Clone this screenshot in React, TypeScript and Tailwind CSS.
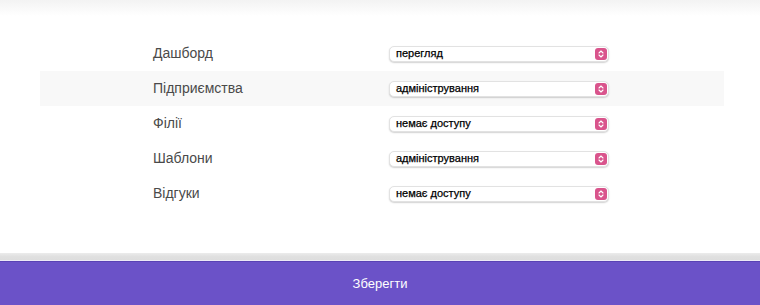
import React from "react";

const rows = [
  { label: "Дашборд", value: "перегляд" },
  { label: "Підприємства", value: "адміністрування" },
  { label: "Філії", value: "немає доступу" },
  { label: "Шаблони", value: "адміністрування" },
  { label: "Відгуки", value: "немає доступу" },
];

function Arrow() {
  return (
    <div className="w-[12px] h-[12px] rounded-[3px] bg-[#d9548c] flex items-center justify-center">
      <svg width="8" height="10" viewBox="0 0 8 10" fill="none">
        <path d="M2 4 L4 2 L6 4" stroke="white" strokeWidth="1.1" strokeLinecap="round" strokeLinejoin="round" />
        <path d="M2 6 L4 8 L6 6" stroke="white" strokeWidth="1.1" strokeLinecap="round" strokeLinejoin="round" />
      </svg>
    </div>
  );
}

export default function App() {
  return (
    <div className="w-[760px] h-[305px] bg-white flex flex-col overflow-hidden" style={{ fontFamily: '"Liberation Sans", Arial, sans-serif' }}>
      <div className="relative flex-1 flex flex-col">
        <div className="absolute left-0 right-0 top-0 h-[16px] bg-gradient-to-b from-[#f3f3f3] to-white" />
        <div className="relative pt-[36px] pl-[40px] pr-[36px]">
          {rows.map((r, i) => (
            <div key={r.label} className={`h-[35px] flex items-center ${i === 1 ? "bg-[#f8f8f8]" : ""}`}>
              <div className="w-[349px] pl-[113px] text-[14px] text-[#4a4a4a] shrink-0 whitespace-nowrap">{r.label}</div>
              <div className="w-[220px] h-[16px] rounded-[5px] bg-white border border-[#e2e2e2] shadow-[0_1px_1.5px_rgba(0,0,0,0.18)] flex items-center justify-between pl-[6px] pr-[1px]">
                <span className="text-[11px] leading-none text-black [-webkit-text-stroke:0.25px_black]">{r.value}</span>
                <Arrow />
              </div>
            </div>
          ))}
        </div>
        <div className="mt-auto h-[8px] bg-gradient-to-b from-[#ececec] via-[#e0e0e0] to-[#dddddd] border-b border-[#ece9f6]" />
      </div>
      <div className="h-[44px] bg-[#6b52c8] border-t border-[#5a42b5] flex items-center justify-center text-white text-[13px]">
        Зберегти
      </div>
    </div>
  );
}
